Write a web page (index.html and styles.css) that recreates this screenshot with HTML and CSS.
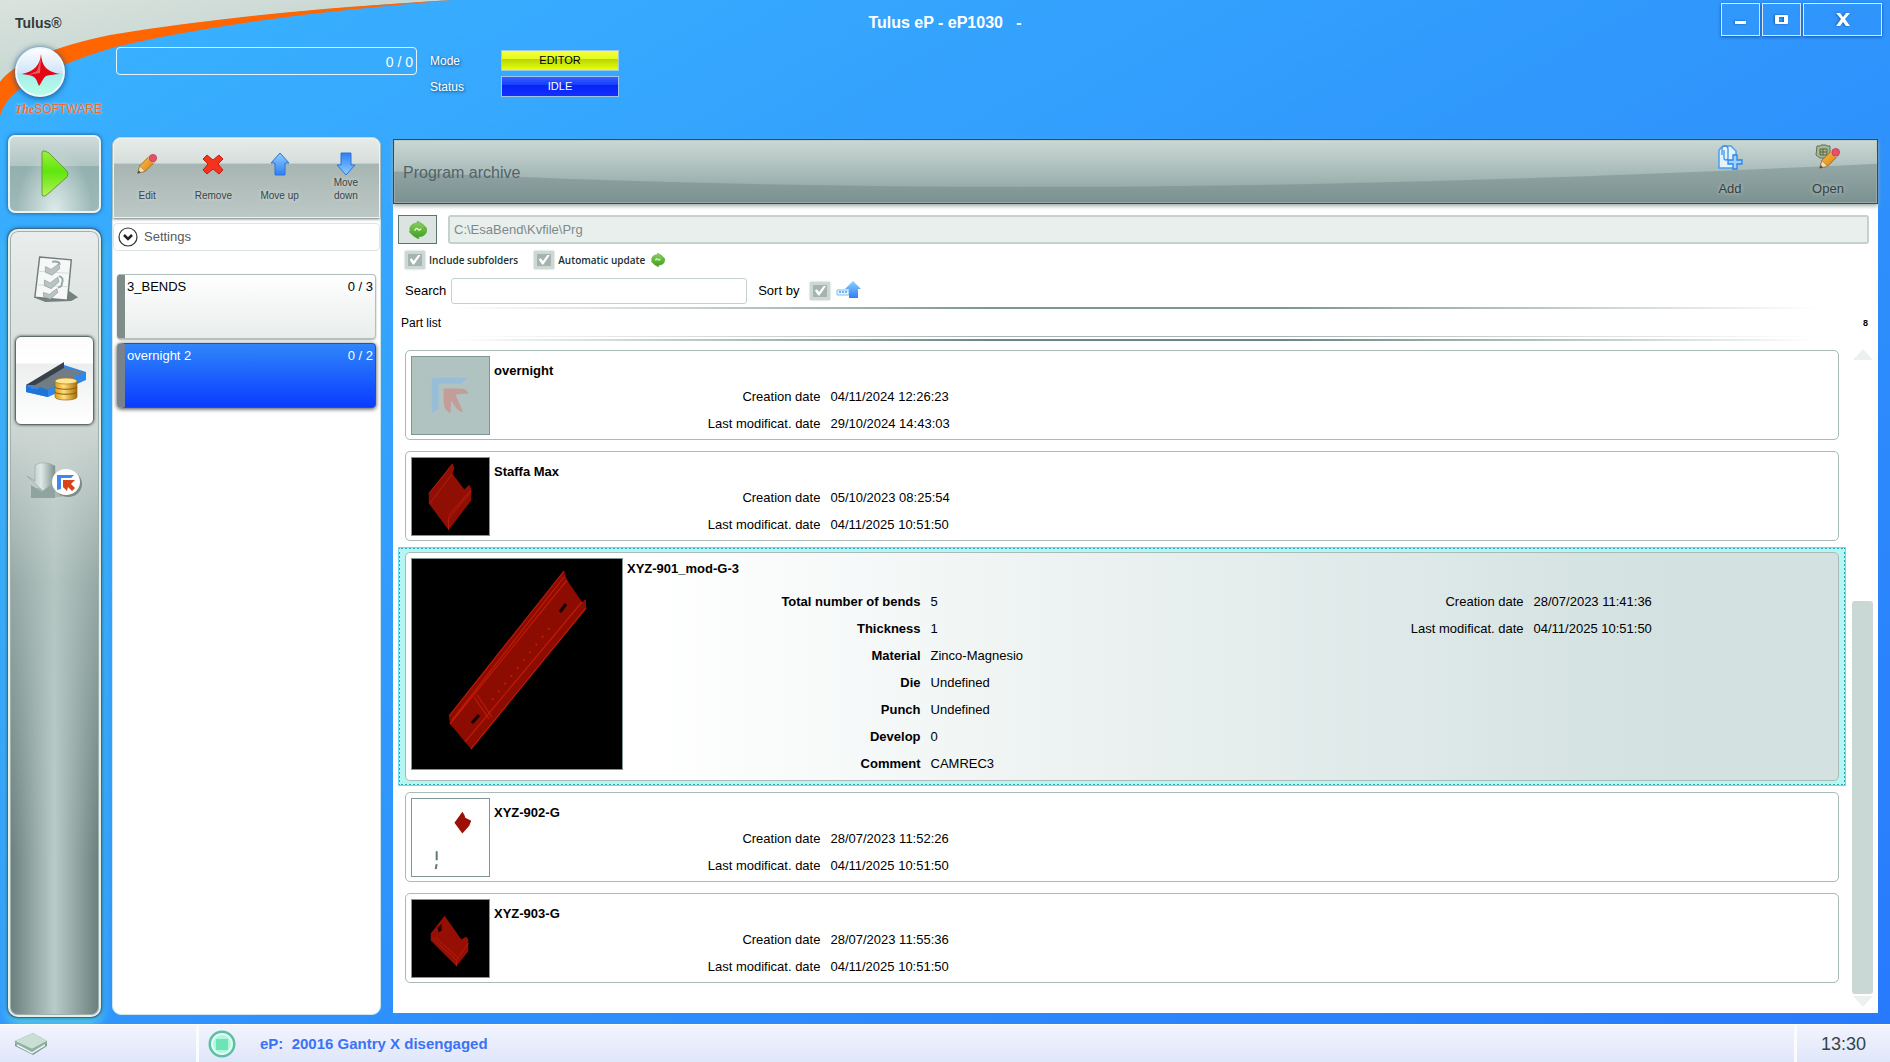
FILE: index.html
```html
<!DOCTYPE html>
<html lang="en">
<head>
<meta charset="utf-8">
<title>Tulus eP - eP1030</title>
<link rel="stylesheet" href="styles.css">
</head>
<body>
<svg class="defs" width="0" height="0" aria-hidden="true">
  <defs>
    <linearGradient id="gUp" x1="0" y1="0" x2="0" y2="1"><stop offset="0" stop-color="#8fd0ff"/><stop offset="1" stop-color="#2f7df5"/></linearGradient>
    <linearGradient id="gDown" x1="0" y1="1" x2="0" y2="0"><stop offset="0" stop-color="#8fd0ff"/><stop offset="1" stop-color="#2f7df5"/></linearGradient>
    <linearGradient id="gPlay" x1="0" y1="0" x2="0" y2="1"><stop offset="0" stop-color="#9cf03c"/><stop offset=".45" stop-color="#5ee60c"/><stop offset="1" stop-color="#b4f25a"/></linearGradient>
    <linearGradient id="gPencil" x1="0" y1="0" x2="1" y2="1"><stop offset="0" stop-color="#ffc44a"/><stop offset="1" stop-color="#d97e10"/></linearGradient>
    <linearGradient id="gGreen" x1="0" y1="0" x2="0" y2="1"><stop offset="0" stop-color="#8ed45c"/><stop offset="1" stop-color="#3c9a20"/></linearGradient>
    <linearGradient id="gGold" x1="0" y1="0" x2="1" y2="0"><stop offset="0" stop-color="#d99a1c"/><stop offset=".4" stop-color="#ffdf7a"/><stop offset="1" stop-color="#a86c08"/></linearGradient>
    <linearGradient id="gLogo" x1="0" y1="0" x2="0" y2="1"><stop offset="0" stop-color="#fff"/><stop offset=".52" stop-color="#cfe4f8"/><stop offset=".53" stop-color="#a6ecec"/><stop offset="1" stop-color="#b8ffe6"/></linearGradient>
    <linearGradient id="gSteel" x1="0" y1="0" x2="1" y2="0"><stop offset="0" stop-color="#a9bab7"/><stop offset=".5" stop-color="#dfe9e6"/><stop offset="1" stop-color="#7d918e"/></linearGradient>
    <linearGradient id="gGrey" x1="0" y1="0" x2="1" y2="1"><stop offset="0" stop-color="#dbe3de"/><stop offset="1" stop-color="#b4cbc6"/></linearGradient>
  </defs>
  <symbol id="pencil" viewBox="0 0 24 24">
    <path d="M2 22l2-8L14 4l6 6L10 20z" fill="url(#gPencil)" stroke="#a8641a" stroke-width="1"/>
    <path d="M2 22l2-8 6 6z" fill="#f3dcb0" stroke="#8a6a40" stroke-width=".6"/>
    <path d="M2 22l1-3 2 2z" fill="#333"/>
    <path d="M14 4l6 6" stroke="#c9c9d0" stroke-width="3"/>
    <circle cx="18.500" cy="5.500" r="4" fill="#e8506a" stroke="#b93850" stroke-width=".8"/>
  </symbol>
  <symbol id="refresh" viewBox="0 0 24 24">
    <path d="M1 12C1 6 5 3 11 3V0l7 4 5 5-3 1h4c0 7-4 11-11 11v3l-7-4-6-6 3-1z" fill="url(#gGreen)" stroke="#4aa02c" stroke-width=".7"/>
    <path d="M8 13c0-3 3-4 4-2s3 1 4-1" fill="none" stroke="#dff5cf" stroke-width="2"/>
  </symbol>
</svg>

<header class="top">
  <svg class="swoosh" viewBox="0 0 460 120" aria-hidden="true">
    <path d="M0 0H450C330 8 220 17 110 36 50 48 12 66 0 82z" fill="url(#gGrey)"/>
    <path d="M455 0C330 7 220 17 110 35 55 46 12 64 0 82V116C6 92 40 70 115 47 220 23 330 10 455 0z" fill="#ff6500"/>
  </svg>
  <div class="top-left">
    <div class="brand">
      <span class="brand-name">Tulus®</span>
      <svg class="logo" viewBox="0 0 50 52" aria-hidden="true">
        <circle cx="25" cy="26" r="24" fill="url(#gLogo)" stroke="#eef8ff" stroke-width="2"/>
        <path d="M26 8c1 11 4 17 19 20-11 1-14 1-16 4-2 3-3 5-5 8-2-4-2-6-4-8-2-2-4-3-13-4 13-3 18-9 19-20z" fill="#e30613"/>
        <path d="M26 12l-1 15-12 2 9-4z" fill="#fff" opacity=".35"/>
      </svg>
      <span class="brand-sub"><b>The</b>SOFTWARE</span>
    </div>
    <div class="meter">0 / 0</div>
    <dl class="state">
      <dt>Mode</dt><dd class="editor">EDITOR</dd>
      <dt>Status</dt><dd class="idle">IDLE</dd>
    </dl>
  </div>
  <h1>Tulus eP - eP1030 &nbsp; -</h1>
  <div class="win">
    <button aria-label="Minimize"><svg width="14" height="14" viewBox="0 0 14 14"><rect x="1" y="8" width="11" height="3" fill="#fff"/></svg></button>
    <button aria-label="Restore"><svg width="16" height="14" viewBox="0 0 16 14"><path fill-rule="evenodd" d="M2 2h11q1 0 1 1v7q0 1-1 1H2q-1 0-1-1V3q0-1 1-1zm3 2v5h5V4z" fill="#fff"/></svg></button>
    <button class="close" aria-label="Close"><svg width="14" height="13" viewBox="0 0 14 13"><path d="M0 0h4l3 4 3-4h4L9 6l5 7h-4L7 9l-3 4H0l5-7z" fill="#fff"/></svg></button>
  </div>
</header>

<main class="work">
  <nav class="rail">
    <button class="play" aria-label="Run"><svg width="30" height="50" viewBox="0 0 30 50"><path d="M2 4q0-3 3-2l4 2 18 18q2 3 0 6L9 44l-4 3q-3 1-3-2z" fill="url(#gPlay)" stroke="#6a9a3c" stroke-width="1"/></svg></button>
    <div class="tabs">
      <button class="tab first" aria-label="Programs">
        <svg width="48" height="48" viewBox="0 0 50 50"><path d="M5 44l10 4 27-1 7-4-10-7z" fill="#4a5654" opacity=".7"/><path d="M9 1l33 3-4 42-34-3z" fill="#f6f8f7" stroke="#6f7d7b" stroke-width="1.500"/><path d="M8 16l32 2M7 30l32 2" stroke="#d2dada"/><g fill="#b9c3c2" stroke="#909d9c" stroke-width=".7"><path d="M15 11l6 3 8-6 1 5-8 7-7-3z"/><path d="M14 25l6 3 8-6 1 5-8 7-7-3z"/><path d="M13 38l6 2 8-6 1 4-8 7-7-3z"/></g><path d="M22 6q8-1 8 3M29 21q6 1 3 8M28 33q5-1 4-5" fill="none" stroke="#9aa6a5" stroke-width="2"/></svg>
      </button>
      <button class="tab active" aria-label="Archive">
        <svg width="62" height="40" viewBox="0 0 62 40"><path d="M2 24L40 4l22 7v8L24 36 2 31z" fill="#2f87e8"/><path d="M2 24L40 1v6L14 24z" fill="#39424a"/><path d="M8 26L40 7l20 4-36 17z" fill="#727c84"/><path d="M2 24l6 4h6l2-2 8 3v7L2 31z" fill="#1f74d8"/><path d="M31 20v16c0 4 22 4 22 0V20z" fill="url(#gGold)" stroke="#9a6a10" stroke-width=".7"/><ellipse cx="42" cy="20" rx="11" ry="3" fill="#ffe694" stroke="#b07c18" stroke-width=".7"/><path d="M31 26c2 3 20 3 22 0M31 31c2 3 20 3 22 0" fill="none" stroke="#8a5c08"/></svg>
      </button>
      <button class="tab last" aria-label="Import">
        <svg width="56" height="40" viewBox="0 0 56 40"><path d="M5 36h30V22l-9-9v14H5z" fill="#a6b8b4"/><path d="M4 24l11 7 13-12v18H4z" fill="#8fa39f"/><path d="M8 4q8-5 20 1v16l-12 9L0 15l8 5z" fill="url(#gSteel)" stroke="#8a9d9a" stroke-width=".5"/><ellipse cx="41" cy="23" rx="14" ry="13" fill="#53625f" opacity=".6"/><ellipse cx="39" cy="21" rx="14" ry="13" fill="#fff"/><path d="M30 29V14h17l-3 3H34v11z" fill="#3f86f0"/><path d="M36 19h12l-4 4 4 4-3 3-4-4-1 4-4-4z" fill="#d8431a"/></svg>
      </button>
    </div>
  </nav>

  <section class="queue">
    <div class="tools">
      <button><svg width="22" height="24"><use href="#pencil"/></svg><span>Edit</span></button>
      <button><svg width="22" height="24" viewBox="0 0 22 24"><path d="M5 3l6 5 6-5 4 4-5 5 5 6-4 4-6-5-6 5-4-4 5-6-5-5z" fill="#f5321e" stroke="#c41e10" stroke-linejoin="round"/></svg><span>Remove</span></button>
      <button><svg width="20" height="24" viewBox="0 0 20 24"><path d="M10 1l9 10h-4v12H5V11H1z" fill="url(#gUp)" stroke="#2a74d8"/></svg><span>Move up</span></button>
      <button><svg width="20" height="24" viewBox="0 0 20 24"><path d="M10 23l9-10h-4V1H5v12H1z" fill="url(#gDown)" stroke="#2a74d8"/></svg><span>Move down</span></button>
    </div>
    <button class="settings"><svg width="20" height="20" viewBox="0 0 20 20"><circle cx="10" cy="10" r="9" fill="#fff" stroke="#333" stroke-width="1.200"/><path d="M6 8l4 4 4-4" fill="none" stroke="#222" stroke-width="2.500"/></svg>Settings</button>
    <ul class="jobs">
      <li class="job"><span>3_BENDS</span><span>0 / 3</span></li>
      <li class="job on"><span>overnight 2</span><span>0 / 2</span></li>
    </ul>
  </section>

  <section class="archive">
    <header class="bar">
      <svg class="gloss" viewBox="0 0 1000 64" preserveAspectRatio="none" aria-hidden="true"><path d="M0 32C300 54 600 54 1000 24V64H0z" fill="#6f8686" opacity=".45"/></svg>
      <h2>Program archive</h2>
      <button class="act"><svg width="26" height="26" viewBox="0 0 26 26"><path d="M2 6L6 2h8l5 5v17H2z" fill="#e4f3ff" stroke="#4aa0ee" stroke-width="1.500"/><path d="M5 11V5q0-3 3-3t3 3v9q0 2-2 2t-2-2V6" fill="none" stroke="#3f93ea" stroke-width="1.300"/><path d="M16 11h4v5h5v4h-5v5h-4v-5h-5v-4h5z" fill="#9fd2ff" stroke="#2c84e6" stroke-width="1.300"/></svg><span>Add</span></button>
      <button class="act"><svg width="26" height="26" viewBox="0 0 26 26"><path d="M2 2h3l1-1h5l1 1h3v12H5l-4-3z" fill="#a9b793" stroke="#5f7050"/><path d="M5 5h7v6H5zM8 5v6M5 8h7" fill="none" stroke="#53634a"/><svg x="3" y="3" width="23" height="23"><use href="#pencil"/></svg></svg><span>Open</span></button>
    </header>

    <div class="path">
      <button class="reload" aria-label="Reload"><svg width="18" height="18"><use href="#refresh"/></svg></button>
      <input type="text" value="C:\EsaBend\Kvfile\Prg" aria-label="Folder" readonly>
    </div>
    <div class="opts">
      <label><input type="checkbox" checked>Include subfolders</label>
      <label><input type="checkbox" checked>Automatic update</label>
      <svg class="mini" width="14" height="14"><use href="#refresh"/></svg>
    </div>
    <div class="find">
      <label for="q">Search</label><input id="q" type="text">
      <label for="sort">Sort by</label><input id="sort" type="checkbox" checked>
      <svg width="25" height="20" viewBox="0 0 25 20"><path d="M1 9h12v5H1z" fill="#e9f4ff" stroke="#7fbdf4"/><path d="M3 11h8" stroke="#6fb2f0" stroke-width="2" stroke-dasharray="2 1"/><path d="M17 0l8 8h-3v9h-9V8H9z" fill="url(#gUp)"/></svg>
    </div>
    <div class="listhead"><span>Part list</span><span class="count">8</span></div>

    <div class="listing">
      <ul class="parts">
        <li class="part">
          <div class="card">
            <div class="thumb none"><svg viewBox="0 0 78 78"><path d="M20 57V21h36l-6 6H27v26z" fill="#98bdd9"/><path d="M32 32h16q8 0 9 5l-13 1 8 18q-7-1-12-12-1 8-1 13-7-3-7-12z" fill="#c39e99"/></svg></div>
            <div class="info"><h3>overnight</h3>
              <div class="cols"><dl><dt>Creation date</dt><dd>04/11/2024 12:26:23</dd><dt>Last modificat. date</dt><dd>29/10/2024 14:43:03</dd></dl></div></div>
          </div>
        </li>
        <li class="part">
          <div class="card">
            <div class="thumb"><svg viewBox="0 0 78 78"><path d="M17 36L41 6l2 4-2 6 12 16 5-5 2 4v12L37 73 17 46z" fill="#8f0f04"/><path d="M17 36L41 6M18 46l23-30M37 58l22-25M37 73V60M37 61l23-27" fill="none" stroke="#b81c0c"/></svg></div>
            <div class="info"><h3>Staffa Max</h3>
              <div class="cols"><dl><dt>Creation date</dt><dd>05/10/2023 08:25:54</dd><dt>Last modificat. date</dt><dd>04/11/2025 10:51:50</dd></dl></div></div>
          </div>
        </li>
        <li class="part sel">
          <div class="card">
            <div class="thumb"><svg viewBox="0 0 210 210"><path d="M37 157L152 12l3 9 15 22 4-3v9L59 190 38 165z" fill="#8c0c02"/><path d="M37 157L152 12M38 165L155 21M40 161L152 18M53 183L170 43M59 190L174 49M62 138l15 22M65 136l15 22" fill="none" stroke="#c01a08" stroke-width="1.200"/><path d="M80 141L140 66" stroke="#c01806" stroke-width="2" stroke-dasharray="2 8"/><path d="M60 164l7-8M148 53l6-8" stroke="#100" stroke-width="3"/></svg></div>
            <div class="info"><h3>XYZ-901_mod-G-3</h3>
              <div class="cols">
                <dl class="strong"><dt>Total number of bends</dt><dd>5</dd><dt>Thickness</dt><dd>1</dd><dt>Material</dt><dd>Zinco-Magnesio</dd><dt>Die</dt><dd>Undefined</dd><dt>Punch</dt><dd>Undefined</dd><dt>Develop</dt><dd>0</dd><dt>Comment</dt><dd>CAMREC3</dd></dl>
                <dl><dt>Creation date</dt><dd>28/07/2023 11:41:36</dd><dt>Last modificat. date</dt><dd>04/11/2025 10:51:50</dd></dl>
              </div></div>
          </div>
        </li>
        <li class="part">
          <div class="card">
            <div class="thumb white"><svg viewBox="0 0 78 78"><path d="M43 24l8-11 2 3 1 3 6 3-2 5-7 8z" fill="#9c1005"/><path d="M25 53v9M25 66l-1 5" stroke="#5c7a70" stroke-width="2"/></svg></div>
            <div class="info"><h3>XYZ-902-G</h3>
              <div class="cols"><dl><dt>Creation date</dt><dd>28/07/2023 11:52:26</dd><dt>Last modificat. date</dt><dd>04/11/2025 10:51:50</dd></dl></div></div>
          </div>
        </li>
        <li class="part">
          <div class="card">
            <div class="thumb"><svg viewBox="0 0 78 78"><path d="M19 34L33 16l17 24 5-3 2 3v12L45 67 26 48l-7-7z" fill="#960f04"/><path d="M20 38l25 23 12-17M45 67v-6M24 38l22 20" fill="none" stroke="#b91b0a"/><path d="M26 28l4-4v7l-3 2z" fill="#200"/></svg></div>
            <div class="info"><h3>XYZ-903-G</h3>
              <div class="cols"><dl><dt>Creation date</dt><dd>28/07/2023 11:55:36</dd><dt>Last modificat. date</dt><dd>04/11/2025 10:51:50</dd></dl></div></div>
          </div>
        </li>
      </ul>
      <div class="scroll">
        <button aria-label="Scroll up"><svg width="20" height="11" viewBox="0 0 20 11"><path d="M10 0l10 11H0z" fill="#ecf1ef"/></svg></button>
        <div class="track"><div class="grip"></div></div>
        <button aria-label="Scroll down"><svg width="20" height="11" viewBox="0 0 20 11"><path d="M10 11L0 0h20z" fill="#ecf1ef"/></svg></button>
      </div>
    </div>
  </section>
</main>

<footer class="foot">
  <div class="cell eraser"><svg width="36" height="26" viewBox="0 0 36 26"><path d="M2 10L20 2l14 8v5L20 24 2 15z" fill="#7d9c92"/><path d="M2 10L20 2l14 8-15 8z" fill="#c9dfd4"/><path d="M2 10l17 8 15-8v2l-15 9L2 13z" fill="#8fb0a4"/><path d="M4 14l15 8 13-8" fill="none" stroke="#eef5f2" stroke-width="1.500"/></svg></div>
  <div class="cell msg"><svg width="28" height="28" viewBox="0 0 28 28"><circle cx="14" cy="14" r="12" fill="#aef8dc" stroke="#5cc0a4" stroke-width="3"/><circle cx="14" cy="14" r="10" fill="none" stroke="#e2fff5" stroke-width="2"/><rect x="8" y="9" width="12" height="11" fill="#6fe3b8"/></svg><span>eP: &nbsp;20016 Gantry X disengaged</span></div>
  <time class="cell clock">13:30</time>
</footer>
</body>
</html>
```
FILE: styles.css
```css
* { box-sizing: border-box; }

body {
  margin: 0;
  min-height: 100vh;
  display: flex;
  flex-direction: column;
  position: relative;
  font: 13px/16px "Liberation Sans", Arial, sans-serif;
  color: #000;
  background: linear-gradient(to bottom right, #3ab3ff 0%, #2f95fc 50%, #2879fd 100%);
}

h1, h2, h3, dl, dd, ul { margin: 0; padding: 0; }
ul { list-style: none; }
button { font: inherit; color: inherit; border: 0; padding: 0; background: none; }
svg { display: block; flex: none; }
.defs { position: absolute; }

/* header */
.top {
  display: grid;
  grid-template-columns: 1fr auto 1fr;
  align-items: start;
  height: 135px;
  position: relative;
}
.swoosh { position: absolute; left: 0; top: 0; width: 460px; height: 120px; }
.top-left { display: flex; position: relative; }
.brand { width: 116px; padding: 15px 0 0 15px; }
.brand-name { display: block; font-size: 14px; font-weight: bold; color: #333a3a; }
.logo { width: 50px; height: 52px; margin: 15px 0 3px; filter: drop-shadow(0 1px 3px #12508c); }
.brand-sub { display: block; font-size: 12px; color: #f26a2a; text-shadow: 0 0 3px #cdeaff; }
.brand-sub b { font-family: "Liberation Serif", serif; font-style: italic; }
.meter {
  width: 301px;
  height: 28px;
  margin: 47px 13px 0 0;
  padding: 0 3px;
  border: 1px solid #e4f4ff;
  border-radius: 4px;
  color: #fff;
  font-size: 14px;
  line-height: 28px;
  text-align: right;
}
.state {
  display: grid;
  grid-template-columns: 71px 118px;
  align-content: start;
  row-gap: 5px;
  margin-top: 50px;
  font-size: 12px;
}
.state dt { color: #fff; line-height: 23px; height: 21px; text-shadow: 1px 1px 3px #0a3c78; }
.state dd { height: 21px; line-height: 18px; font-size: 11px; text-align: center; border: 1px solid #9ec6e8; }
.editor { background: linear-gradient(#f4ff3c 0%, #e6fa1e 40%, #b8d400 42%, #e8ff10 100%); }
.idle { color: #fff; background: linear-gradient(#3c5cff 0%, #1440ff 40%, #0a22f4 42%, #1030ff 100%); }
.top h1 { margin-top: 14px; font-size: 16px; line-height: 18px; color: #fff; }
.win { display: flex; gap: 2px; justify-content: flex-end; padding: 3px 8px 0 0; }
.win button {
  display: grid;
  place-items: center;
  width: 39px;
  height: 33px;
  border: 1px solid #dfe9f5;
  box-shadow: 0 1px 3px #1554a8;
}
.win svg { filter: drop-shadow(-1px 0 1px #1b58a8); }
.win .close { width: 79px; }

/* workspace */
.work {
  flex: 1;
  display: grid;
  grid-template-columns: 93px 269px minmax(0, 1fr);
  column-gap: 11px;
  padding: 0 12px 7px 8px;
}

.rail { display: flex; flex-direction: column; gap: 16px; }
.play {
  height: 78px;
  display: grid;
  place-items: center;
  border: 2px solid #eaf4f2;
  border-radius: 7px;
  background: radial-gradient(ellipse at 50% 100%, #dcebe9 0%, transparent 60%), linear-gradient(#cfdcda 0%, #b0c5c3 39%, #92b0ae 40%, #9fbab8 100%);
  box-shadow: 0 0 4px #14508c;
}
.tabs {
  flex: 1;
  padding: 5px;
  border: 2px solid #e6efec;
  border-radius: 10px;
  background:
    linear-gradient(#e9edeb 0%, #cdd6d3 25%, rgba(176,194,190,.6) 45%, transparent 80%),
    linear-gradient(90deg, #6a7f7c 0%, #b9cbc8 50%, #6a7f7c 100%);
  box-shadow: inset 0 0 0 1px #9fb0ad, 0 0 0 1px #40688c, 0 0 5px #0c3c70, 0 6px 12px #5fe0e8;
}
.tab { display: grid; place-items: center; width: 79px; height: 89px; border-radius: 6px; }
.tab.first { height: 100px; padding-bottom: 12px; }
.tab.last { height: 112px; }
.tab.active {
  background: linear-gradient(#fbfcfc 0%, #fff 30%, #eceeee 31%, #fff 100%);
  border: 1px solid #5f6c6a;
  box-shadow: 0 0 3px #3c4846;
}

.queue {
  margin: 2px 0;
  background: #fff;
  border: 1px solid #cfe6e8;
  border-radius: 9px;
}
.tools {
  display: grid;
  grid-template-columns: repeat(4, 1fr);
  height: 80px;
  padding: 13px 0 15px;
  border: 1px solid #eef3f2;
  border-radius: 8px 8px 0 0;
  background: linear-gradient(#e6ebe8 0%, #d6dedb 31%, #a7b5b3 32%, #bcc8c6 100%);
  box-shadow: 0 1px 3px #66716f;
}
.tools button { display: flex; flex-direction: column; align-items: center; justify-content: space-between; }
.tools span { font-size: 10px; line-height: 13px; color: #3a4444; max-width: 42px; text-shadow: 0 0 4px #dfe6e4; }
.settings {
  display: flex;
  align-items: center;
  gap: 6px;
  width: 100%;
  height: 28px;
  margin-top: 5px;
  padding: 0 4px;
  border: 1px solid #dde5e3;
  border-radius: 4px;
  color: #555c60;
}
.jobs { display: flex; flex-direction: column; gap: 4px; padding: 23px 4px; }
.job {
  display: flex;
  justify-content: space-between;
  height: 65px;
  padding: 4px 2px 0 2px;
  border: 1px solid #b4bfbc;
  border-left: 8px solid #7f8c8a;
  border-radius: 4px;
  background: linear-gradient(#fff, #e8edeb);
  box-shadow: 0 1px 2px #a5b0ae;
}
.job.on { color: #fff; border-color: #2b50a8; border-left-color: #77828c; background: linear-gradient(#2f86fa, #0a3cff); box-shadow: 0 1px 4px #444; }

/* archive panel */
.archive {
  display: flex;
  flex-direction: column;
  margin: 4px 0 4px 1px;
  background: #fff;
}
.bar {
  display: flex;
  align-items: center;
  height: 65px;
  padding: 0 0 0 9px;
  position: relative;
  border: 1px solid #2f4c5a;
  background: linear-gradient(#cbd8d5 0%, #a9bcba 50%, #869c9b 100%);
  box-shadow: inset 0 0 0 1px #b9cac7, 0 2px 4px #9daaa8;
}
.gloss { position: absolute; left: 0; top: 0; width: 100%; height: 100%; }
.bar h2 { flex: 1; position: relative; font-size: 16px; font-weight: normal; color: #566266; padding-top: 3px; }
.act {
  position: relative;
  display: flex;
  flex-direction: column;
  align-items: center;
  gap: 11px;
  width: 98px;
  height: 60px;
  padding-top: 2px;
  color: #36413f;
  text-shadow: 0 0 4px #c9d5d2;
}

.path { display: flex; gap: 11px; padding: 11px 9px 0 5px; }
.reload { display: grid; place-items: center; width: 39px; height: 29px; border: 1px solid #5d7370; background: #dbe4e1; }
input[type="text"] { font: inherit; outline: 0; border: 1px solid #c4d2ce; border-radius: 3px; background: #fff; }
.path input { flex: 1; min-width: 0; padding: 0 4px; border-width: 2px; background: #e9efed; color: #7c8a8c; }
.opts { display: flex; align-items: center; gap: 16px; height: 31px; padding: 0 12px; font: 600 10px/16px "Open Sans", "Noto Sans", sans-serif; color: #22302f; }
.opts label { display: flex; align-items: center; gap: 4px; }
.opts .mini { margin-left: -10px; }
input[type="checkbox"] {
  appearance: none;
  width: 20px;
  height: 18px;
  margin: 0;
  display: grid;
  place-items: center;
  border: 3px solid #cdd8d5;
  background: #a6b4b1;
  box-shadow: 0 0 2px #b9c6c3;
}
input[type="checkbox"]:checked::after {
  content: "";
  width: 11px;
  height: 10px;
  background: #fff;
  clip-path: polygon(0 50%, 18% 38%, 38% 65%, 82% 0, 100% 8%, 42% 100%, 30% 100%);
}
.find { display: flex; align-items: center; height: 31px; padding: 0 12px; }
.find #q { width: 296px; height: 26px; margin: 0 11px 0 5px; }
.find #sort { margin: 0 6px 0 11px; }
.listhead {
  display: flex;
  align-items: center;
  justify-content: space-between;
  height: 34px;
  padding: 0 10px 0 8px;
  margin-top: 1px;
  font-size: 12px;
  background:
    linear-gradient(90deg, transparent 4%, #7f9694 40%, #7f9694 60%, transparent 96%) 0 0 / 100% 2px no-repeat,
    linear-gradient(90deg, transparent 4%, #a5b5b3 40%, #a5b5b3 60%, transparent 96%) 0 29px / 100% 1px no-repeat,
    linear-gradient(90deg, transparent 4%, #6f8684 40%, #6f8684 60%, transparent 96%) 0 32px / 100% 2px no-repeat;
}
.listhead span { padding-bottom: 3px; }
.count { font-size: 9px; font-weight: bold; }

/* part list */
.listing { flex: 1; display: flex; gap: 6px; padding: 4px 5px 0; }
.parts { flex: 1; display: flex; flex-direction: column; gap: 1px; }
.part { padding: 4px 6px; border: 1px solid transparent; }
.card {
  display: flex;
  gap: 4px;
  padding: 5px 5px 2px;
  border: 1px solid #a9bab7;
  border-radius: 5px;
}
.thumb { width: 79px; height: 79px; flex: none; background: #000; border: 1px solid #7f9794; }
.thumb svg { width: 100%; height: 100%; }
.thumb.none { background: #b0c3c1; }
.thumb.white { background: #fff; }
.info { flex: 1; }
.info h3 { font-size: 13px; line-height: 16px; padding-top: 7px; }
.cols { display: flex; }
.cols dl {
  flex: 0 0 50%;
  display: grid;
  grid-template-columns: 99fr 101fr;
  grid-auto-rows: 27px;
  align-content: start;
  column-gap: 10px;
  line-height: 27px;
  padding-top: 4px;
}
.cols dt { text-align: right; }
.strong dt { font-weight: bold; }
.sel { padding: 3px 5px; border: 2px dotted #26a9bc; background: #b5f5f2; outline: 1px solid #6adcf4; outline-offset: -1px; }
.sel .card { min-height: 229px; background: linear-gradient(90deg, #fff 17%, #edf3f2 45%, #d3e1e1 88%); }
.sel .thumb { width: 212px; height: 212px; }
.sel h3 { padding-top: 3px; }
.sel dl { padding-top: 11px; }

.scroll { display: flex; flex-direction: column; align-items: center; width: 21px; padding: 4px 0 6px; }
.track { flex: 1; width: 100%; display: flex; flex-direction: column; justify-content: flex-end; padding-bottom: 2px; }
.grip { height: 62%; background: #cad8d5; border-radius: 3px; }

/* status bar */
.foot { display: flex; height: 38px; background: linear-gradient(#f2f4fd, #e0e6fa); border-top: 1px solid #fff; }
.cell { display: flex; align-items: center; }
.eraser { width: 199px; padding-left: 13px; border-right: 3px solid #fafbff; }
.msg { flex: 1; gap: 24px; padding-left: 9px; font-size: 15px; font-weight: bold; color: #3b73f5; }
.clock { width: 96px; justify-content: center; font-size: 18px; color: #33434a; border-left: 3px solid #fafbff; }
```
